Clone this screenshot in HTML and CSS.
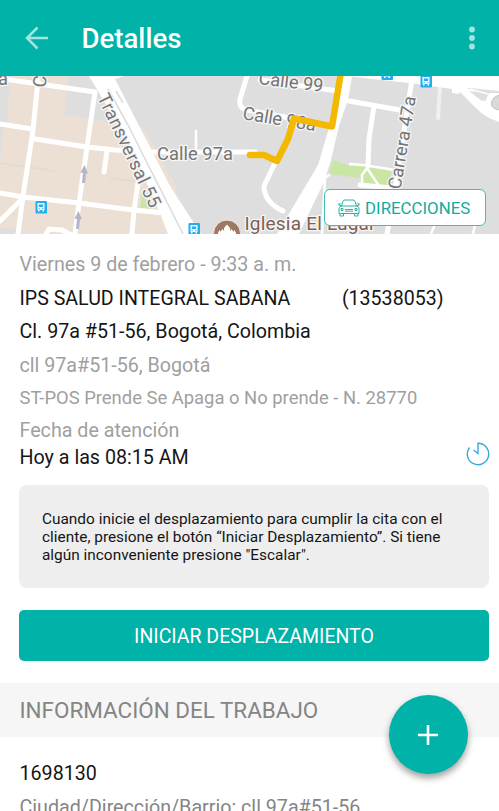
FILE: index.html
```html
<!DOCTYPE html>
<html lang="es">
<head>
<meta charset="utf-8">
<title>Detalles</title>
<link rel="stylesheet" href="styles.css">
</head>
<body>
<header class="bar">
  <svg class="back" width="24" height="24" viewBox="0 0 24 24"><path d="M12.500 1.500 2 12l10.500 10.500M2 12h21"/></svg>
  <h1>Detalles</h1>
  <svg class="more" width="6" height="24" viewBox="0 0 6 24"><circle cx="3" cy="3.500" r="2.900"/><circle cx="3" cy="12" r="2.900"/><circle cx="3" cy="20.500" r="2.900"/></svg>
</header>
<section class="map">
  <svg class="canvas" width="499" height="158" viewBox="0 76 499 158">
    <defs>
      <g id="bus"><rect x="-5.500" y="-6" width="11.500" height="12.500" rx="1" fill="#24aef0"/><path d="M-3.500-4h7v7h-7z" fill="#fff"/><path d="M-2.200-2.500h4.400v2.500h-4.400zM-2.500 1.200h1.300v1h-1.300zM1.200 1.200h1.300v1H1.200z" fill="#24aef0"/><path d="M-3 3h1.500v1.500H-3zM1.500 3H3v1.500H1.500z" fill="#fff"/></g>
      <path id="arrow" d="M1.500 0 5 8.500 3 8.200 2 18H-1L0 8-2.500 7.500z" fill="#b3b5c8"/>
    </defs>
    <path class="block" d="M10 76H68L64 115 98 120 143 127 176 186 180 234H17V229L0 228V163L3 127 7 122z"/>
    <path d="M0 163 55 171M110 178l24 3" stroke="#dedbd5" stroke-width="1.500"/>
    <path class="park" d="M142 194 152 209 140 208z"/>
    <path class="park" d="M333 160 350 166 370 166 392 169 388 186 361 184 360 178 329 174z"/>
    <g class="roads">
      <path d="M0 78.500 95 92M38 80 33 130 23 196 18 234M0 124l32 5M32 138.500 87 147 115 150 152 152H255M95 92 87 147 79 203 75 234M0 193 23 197 79 203 133 210 160 212.500M107 151l-3 21M138 183l-4 27-2 24M0 221 22 199M46 234l3-5 13 1 9 5"/>
      <path d="M247 76 240 99Q238 108 247 110L290 118M260 80 338 91M349 101 400 110M374 106 369 139 368 166M275 163 264 186Q264 202 283 211M412 79 395 190 387 234M360 185 392 188"/>
      <path class="thin" d="M196 131V154M350 164 363 165 395 170M362 184 362 175 367 168 379 186M329 175 325 178 322 234M475 225l-2 9M435 224l-4 10"/>
      <path class="faint" d="M440 86 438 118"/>
    </g>
    <path class="road" d="M89 76H124L115 79 170 186 201 234H168L160 213 130 145z"/>
    <path class="median" d="M108 89 128 125 183 234M116 91l7 12"/>
    <path class="road" d="M342 76H352L348 100 339 126 331 160 324 182 299 234H277L318 165 329 128z"/>
    <path class="road" d="M349 76H499V91L470 88 461 89 459 94 452 93 452 89 409 83 372 79z"/>
    <path class="road" d="M457 89Q470 84 481 99L499 109V122Q484 117 476 108z"/>
    <path d="M469 91 483 94 489 95 482 101z" fill="#dedede"/>
    <path d="M470 89 488 94" fill="none" stroke="#fff" stroke-width="1.500"/>
    <path class="road" d="M489 93H499V112L484 104z"/>
    <path class="loop" d="M500 95Q492 97 491.500 103T500 110"/>
    <use href="#arrow" x="83" y="165"/><use href="#arrow" x="77" y="211"/>
    <use href="#bus" x="41" y="207"/><use href="#bus" x="194" y="229"/><use href="#bus" x="426" y="81"/><use href="#bus" x="387" y="73.500"/>
    <g class="labels">
      <text x="-2" y="84.500">a</text>
      <text transform="translate(45.500 88) rotate(-84)">C</text>
      <text transform="translate(97 97) rotate(64.500)" textLength="124">Transversal 55</text>
      <text x="157" y="160" textLength="76">Calle 97a</text>
      <text transform="translate(258 84) rotate(7)" textLength="65">Calle 99</text>
      <text transform="translate(242 119) rotate(9.500)" textLength="74">Calle 98a</text>
      <text transform="translate(400.500 190) rotate(-80.500)" textLength="94">Carrera 47a</text>
      <text class="place" x="244.500" y="230" textLength="131">Iglesia El Lugar</text>
    </g>
    <path class="route" d="M341 72 332 126.500 294 118.500 288 139 277 161 264 155H250"/>
    <circle cx="227" cy="233.500" r="13.500" fill="#9e7961" stroke="#f0e9e4"/>
    <path d="M218 235v-2l1.500-3 1.500 2v-1l1.500-2 1.500 2v-3l3-3.500 3 3.500v3l1.500-2 1.500 2v1l1.500-2 1.500 3v2z" fill="#fff"/>
  </svg>
  <button class="directions">
    <svg width="22" height="18" viewBox="0 0 22 18"><path d="M3.500 7 5 2.300Q5.500 1 7 1h8q1.500 0 2 1.300L18.500 7M3 7h16q2 1 2 3v4.500H1V10q0-2 2-3zM2 14.500v2.500h3.500v-2.500M16.500 14.500v2.500H20v-2.500M3.500 7 .8 6V4.800h2M18.500 7l2.700-1V4.800h-2M7 10.500h8M7 12.200h8M3 9.500h2v2H3zM17 9.500h2v2h-2z"/></svg>
    <span>DIRECCIONES</span>
  </button>
</section>
<main>
  <section class="info">
    <p class="muted date">Viernes 9 de febrero - 9:33 a. m.</p>
    <p class="client"><span>IPS SALUD INTEGRAL SABANA</span><span class="code">(13538053)</span></p>
    <p class="address">Cl. 97a #51-56, Bogotá, Colombia</p>
    <p class="muted short">cll 97a#51-56, Bogotá</p>
    <p class="muted fault">ST-POS Prende Se Apaga o No prende - N. 28770</p>
    <div class="visit">
      <div><p class="muted when">Fecha de atención</p><p class="time">Hoy a las 08:15 AM</p></div>
      <svg width="24" height="24" viewBox="0 0 24 24"><path d="M3.500 5.500A10.700 10.700 0 1 0 12 1.300V11.500L7.500 8"/></svg>
    </div>
  </section>
  <p class="notice">Cuando inicie el desplazamiento para cumplir la cita con el<br>cliente, presione el botón “Iniciar Desplazamiento”. Si tiene<br>algún inconveniente presione "Escalar".</p>
  <button class="start"><span>INICIAR DESPLAZAMIENTO</span></button>
  <h2><span>INFORMACIÓN DEL TRABAJO</span></h2>
  <section class="job">
    <p class="number">1698130</p>
    <p class="place-line">Ciudad/Dirección/Barrio: cll 97a#51-56</p>
  </section>
</main>
<button class="fab" aria-label="+"><svg width="20" height="20" viewBox="0 0 20 20"><path d="M10 0v20M0 10h20"/></svg></button>
</body>
</html>
```
FILE: styles.css
```css
* { box-sizing: border-box; }
body {
  position: relative;
  margin: 0;
  width: 499px;
  height: 811px;
  overflow: hidden;
  background: #fff;
  color: #151515;
  font-family: Roboto, sans-serif;
  font-size: 19.68px;
}
p, h1, h2 { margin: 0; font-weight: 400; white-space: nowrap; }
button { font: inherit; border: 0; padding: 0; }
svg { display: block; fill: none; flex: none; }

.bar {
  display: flex;
  align-items: center;
  height: 76px;
  padding: 0 24px 0 25px;
  background: #00b2a7;
}
.back { stroke: #a5e3de; stroke-width: 2.5; }
.bar h1 { flex: 1; margin-left: 32.5px; color: #fff; font-size: 27.6px; font-weight: 500; }
.more { fill: #a5e3de; }

.map { position: relative; height: 158px; overflow: hidden; }
.canvas { background: #dedede; }
.block { fill: #ebe0d3; }
.park { fill: #cae6a5; }
.road { fill: #fff; }
.roads { stroke: #fff; stroke-width: 5; stroke-linejoin: round; stroke-linecap: round; }
.thin { stroke-width: 2.5; }
.faint { stroke: #f0f0f0; stroke-width: 4; }
.median { stroke: #dcdcdc; stroke-width: 1.6; }
.loop { fill: #d9d9d5; stroke: #c4c1b4; }
.route { stroke: #f5b800; stroke-width: 6.5; stroke-linecap: round; stroke-linejoin: round; }
.labels text {
  fill: #747474;
  font-size: 18.3px;
  stroke: #f6f6f6;
  stroke-width: 2.6;
  stroke-linejoin: round;
  paint-order: stroke;
}
.labels .place { fill: #7e5f50; font-size: 19px; }
.directions {
  position: absolute;
  left: 324px;
  top: 113px;
  display: flex;
  align-items: center;
  gap: 5px;
  width: 162px;
  height: 37px;
  padding-left: 13px;
  border: 1.5px solid #3cbfb6;
  border-radius: 6px;
  background: #fff;
  color: #16aaa0;
  font-size: 16.85px;
}
.directions svg { stroke: #28b2a8; stroke-width: 1; }

.info { padding: 19px 9px 0 19.5px; }
.muted { color: #9f9f9f; }
.info p { line-height: 24px; }
.client { display: flex; margin-top: 10px; font-size: 19.6px; }
.code { margin-left: 51.5px; }
.address { margin-top: 9px; }
.short { margin-top: 10px; }
.info .fault { margin-top: 8px; font-size: 18.42px; }
.visit { display: flex; justify-content: space-between; margin-top: 9px; }
.visit .time { margin-top: 3px; }
.visit svg { margin-top: 23px; stroke: #3aaada; stroke-width: 1.4; }

.notice {
  height: 103px;
  margin: 15px 10px 0 19px;
  padding: 25px 23px;
  border-radius: 8px;
  background: #eee;
  font-size: 15.4px;
  line-height: 18.2px;
}
.start {
  display: flex;
  align-items: center;
  justify-content: center;
  width: 470px;
  height: 51px;
  margin: 22px 0 0 19px;
  padding-top: 1px;
  border-radius: 5px;
  background: #00b2a7;
  color: #fff;
  font-size: 19.5px;
}
h2 {
  height: 54px;
  margin-top: 22px;
  padding-left: 19.5px;
  background: #f6f6f6;
  color: #858585;
  font-size: 22.45px;
  line-height: 54px;
}
.job { padding: 25px 20px 0 19.5px; }
.job p { line-height: 24px; }
.job .place-line { margin-top: 10px; color: #858585; }
.fab {
  position: absolute;
  left: 389px;
  top: 695px;
  display: grid;
  place-items: center;
  width: 79px;
  height: 79px;
  border-radius: 50%;
  background: #00b2a7;
  box-shadow: 0 4px 7px rgba(0, 0, 0, .38);
}
.fab svg { margin-left: -1px; stroke: #fff; stroke-width: 2.6; }
```
